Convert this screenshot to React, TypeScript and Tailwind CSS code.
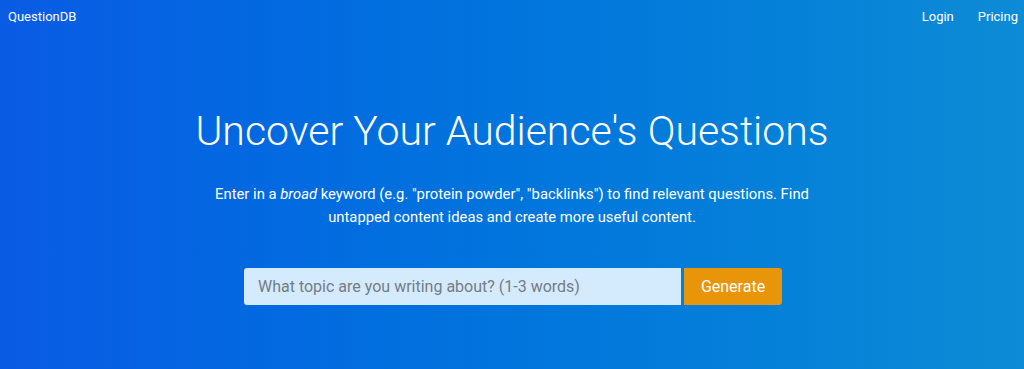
export default function App() {
  return (
    <div
      className="h-[369px] w-full bg-gradient-to-r from-[#0a5be4] to-[#0e8bd5] text-white"
      style={{ fontFamily: 'Roboto, "Liberation Sans", sans-serif' }}
    >
      <nav className="flex items-center justify-between h-[33px] pl-2 pr-[6px] text-[13px]">
        <a className="text-white">QuestionDB</a>
        <div className="flex gap-6">
          <a className="text-white">Login</a>
          <a className="text-white">Pricing</a>
        </div>
      </nav>
      <div className="flex flex-col items-center pt-[72px]">
        <h1 className="text-[41px] font-light leading-[52px]">Uncover Your Audience's Questions</h1>
        <p className="mt-[26px] max-w-[620px] text-center text-[14.8px] leading-[23px]">
          Enter in a <em>broad</em> keyword (e.g. "protein powder", "backlinks") to find relevant
          questions. Find untapped content ideas and create more useful content.
        </p>
        <div className="mt-[39px] ml-[2px] flex gap-[3px]">
          <input
            className="h-[37px] w-[437px] rounded-l-[3px] bg-[#d4eafd] px-[14px] text-[16px] text-gray-800 placeholder:text-[#757d85] outline-none"
            placeholder="What topic are you writing about? (1-3 words)"
          />
          <button className="h-[37px] w-[98px] rounded-r-[3px] bg-[#e8950a] text-[16px] text-white">
            Generate
          </button>
        </div>
      </div>
    </div>
  )
}
